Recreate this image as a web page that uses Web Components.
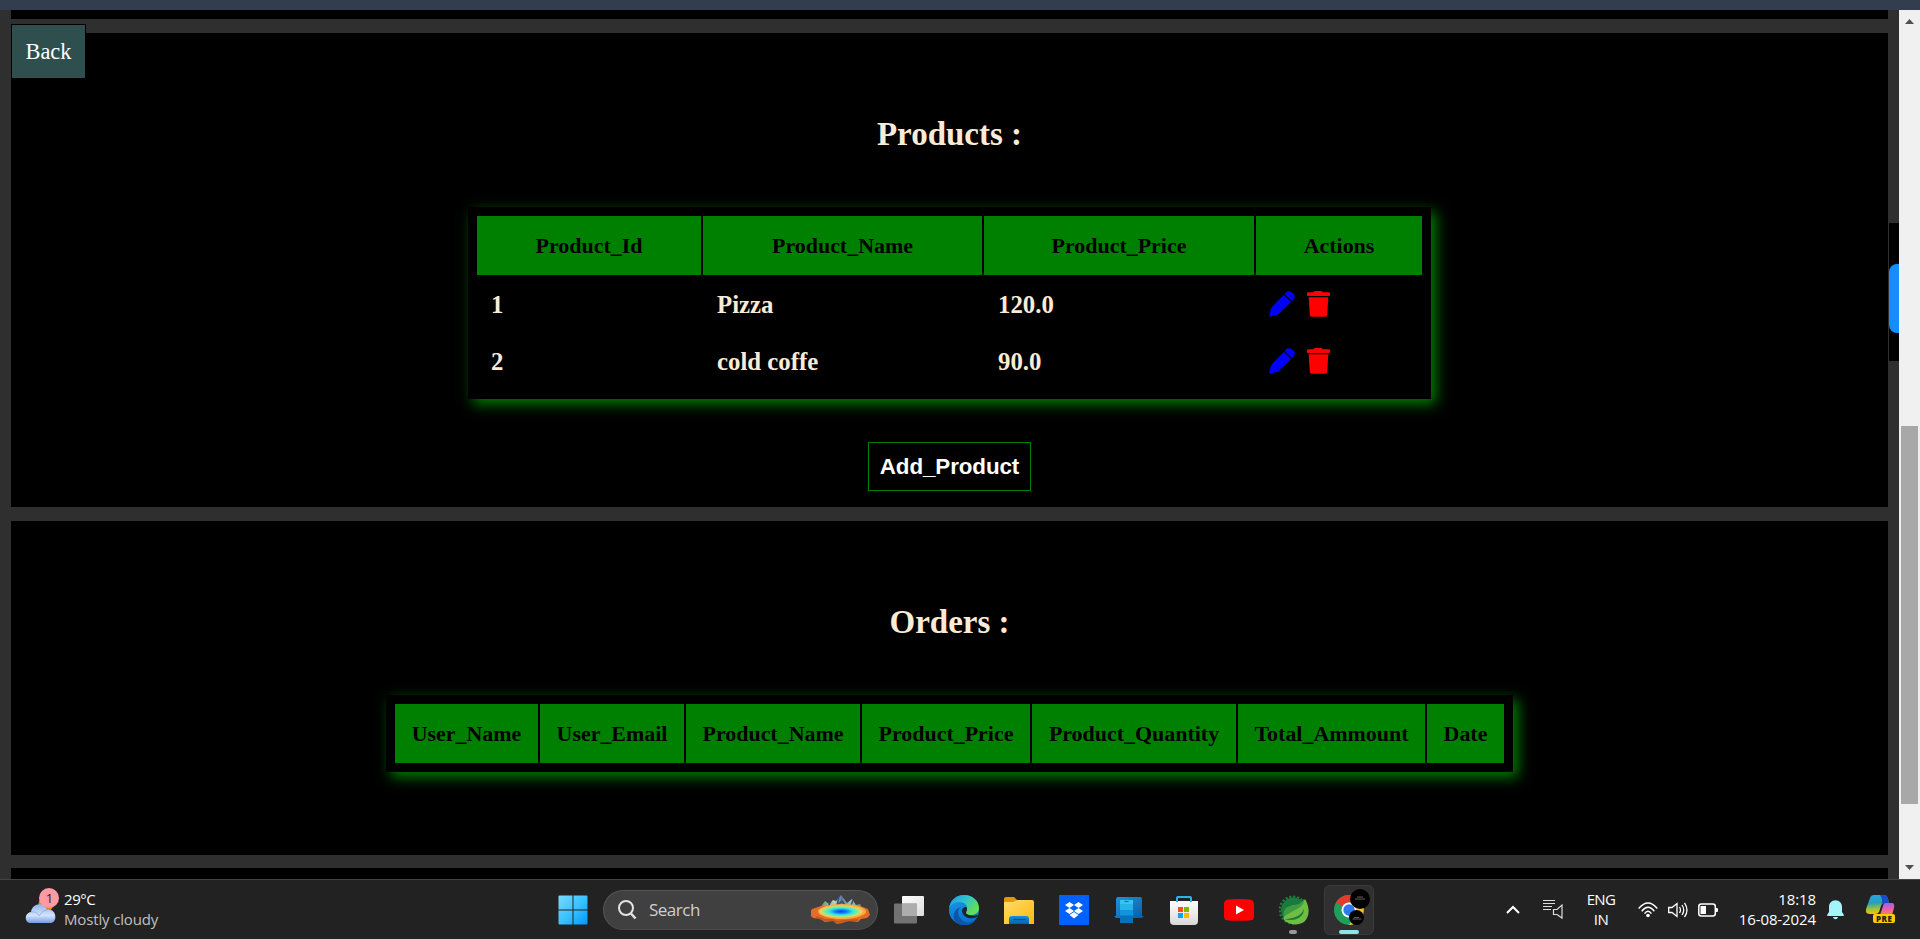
<!DOCTYPE html>
<html lang="en"><head><meta charset="utf-8"><title>Admin</title>
<style>html,body{margin:0;height:100%;overflow:hidden;background:#2f2f2f}</style></head>
<body><admin-screen></admin-screen>
<script>
const define=(name,html,setup)=>{
  const t=document.createElement('template');t.innerHTML=html;
  customElements.define(name,class extends HTMLElement{
    constructor(){super();this.attachShadow({mode:'open'}).append(t.content.cloneNode(true));}
    connectedCallback(){if(setup)setup(this,this.shadowRoot);}
  });
};

define('page-panel',`<style>
:host{display:flex;flex-direction:column;align-items:center;background:#000;box-sizing:border-box;flex:none}
h1{margin:82px 0 0;font:bold 33px/38px "Liberation Serif",serif;color:antiquewhite;height:38px}
.body{margin-top:54px;display:flex;flex-direction:column;align-items:center}
</style><h1></h1><div class="body"><slot></slot></div>`,(el,r)=>{r.querySelector('h1').textContent=el.getAttribute('heading');});

define('action-icons',`<style>:host{display:flex;gap:12px;align-items:center;margin:-2px 0 0 -1px}svg{display:block}</style>
<svg width="26" height="26" viewBox="0 0 26 26" fill="blue"><path d="M17 1.6C18.4.1 20.6-.1 22.4.9c1 .6 2 1.6 2.7 2.6 1 1.7.7 3.8-.8 5.3l-1.300 1.300L15.700 2.900z"/><path d="M14.800 3.900l7.200 7.200L10.200 22.400c-.8.8-1.700 1.300-2.700 1.600L1.500 25.400C.7 25.600.2 25.100.4 24.300L1.800 18.400c.3-1 .8-1.900 1.500-2.600z"/></svg>
<svg width="23" height="26" viewBox="0 0 23 26" fill="red"><path d="M7.500 0h7l1.200 1.300h6c.8 0 1.300.6 1.300 1.400v1c0 .8-.5 1.300-1.300 1.300H1.300C.5 5 0 4.500 0 3.700v-1c0-.8.5-1.400 1.300-1.400h5z"/><path d="M1.700 6.300h19.600L20.200 23.500c-.1 1.400-1 2.300-2.400 2.300H5.200c-1.400 0-2.300-.9-2.400-2.300z"/></svg>`);

define('data-table',`<style>
:host{display:block;background:#000;box-shadow:5px 5px 13px green;padding:9px}
.g{display:grid;gap:2px}
.h{background:green;color:#000;height:59px;display:flex;align-items:center;justify-content:center;font:bold 21.950px/25px "Liberation Serif",serif;box-sizing:border-box;white-space:nowrap}
.c{height:55px;display:flex;align-items:center;padding:1px 0 0 14px;box-sizing:border-box;font:bold 24.800px/28px "Liberation Serif",serif;color:antiquewhite;white-space:nowrap}
</style><div class="g"></div>`,(el,r)=>{
  const g=r.querySelector('.g');
  g.style.gridTemplateColumns=el.getAttribute('cols');
  el.getAttribute('head').split(',').forEach(x=>{const d=document.createElement('div');d.className='h';d.textContent=x;g.append(d);});
  (el.getAttribute('rows')||'').split(';').filter(Boolean).forEach(row=>{
    row.split(',').forEach(x=>{const d=document.createElement('div');d.className='c';d.textContent=x;g.append(d);});
    const d=document.createElement('div');d.className='c';d.append(document.createElement('action-icons'));g.append(d);
  });
});

define('add-button',`<style>:host{display:block;margin-top:43px}
button{width:163px;height:49px;padding:0;background:#000;border:1px solid green;color:#fff;font:bold 22.400px "Liberation Sans",sans-serif;letter-spacing:-.1px;display:block}</style><button><slot></slot></button>`);

define('back-button',`<style>:host{position:absolute;left:11px;top:14px;box-sizing:border-box;width:75px;height:55px;border:1px solid #000;background:darkslategray;color:#fff;font:22.400px/53px "Liberation Serif",serif;text-align:center}</style><slot></slot>`);

define('side-handle',`<style>:host{position:absolute;right:0;top:213px;width:10px;height:138px;background:#000;box-sizing:border-box;padding-top:41px;overflow:hidden}
div{height:69px;width:20px;background:#168cff;border-radius:8px}</style><div></div>`);

define('scroll-bar',`<style>:host{display:flex;flex-direction:column;width:21px;flex:none;background:#f0f0f0;align-items:center}
svg{display:block;flex:none}.t{width:17px;height:378px;background:#a8a8a8;margin-top:402px}.s{flex:1}</style>
<svg width="21" height="14" viewBox="0 0 21 14"><path d="M6 14 10.500 9 15 14z" fill="#505050"/></svg><div class="t"></div><div class="s"></div>
<svg width="21" height="20" viewBox="0 0 21 20"><path d="M6 6 10.500 11 15 6z" fill="#505050"/></svg>`);

define('search-box',`<style>:host{display:flex;align-items:center;box-sizing:border-box;width:275px;height:40px;border:1px solid #555;border-bottom-color:#4a4a4a;border-radius:20px;background:#404040;padding:0 6px 0 14px;font:17px/22px "Open Sans","Noto Sans",sans-serif;color:#cfcfcf}
span{margin-left:12px;flex:1;letter-spacing:-.5px}svg{display:block}</style>
<svg width="19" height="20" viewBox="0 0 19 20" fill="none" stroke="#e4e4e4" stroke-width="2"><circle cx="8" cy="8" r="7"/><path d="M13 13.500 17.500 18.500" stroke-width="2.500"/></svg><span><slot></slot></span>
<svg width="60" height="30" viewBox="0 0 60 30"><defs><radialGradient id="p"><stop offset="0" stop-color="#183cf0"/><stop offset=".3" stop-color="#1488f4"/><stop offset=".55" stop-color="#30e4e8"/><stop offset=".8" stop-color="#90ea90"/><stop offset="1" stop-color="#ffd050"/></radialGradient><linearGradient id="m"><stop stop-color="#5b8f58"/><stop offset=".35" stop-color="#b8d4bc"/><stop offset=".5" stop-color="#60779b"/><stop offset=".7" stop-color="#9cc8b8"/><stop offset="1" stop-color="#537b70"/></linearGradient></defs>
<path d="M8 14 14 6l4 3 4-4 3 1 5-6 6 8 5-4 4 6 4-1 4 8z" fill="url(#m)"/><path d="M28 1 26 11 31 6 35 12M42 5l-3 8M20 6l-3 6" stroke="#344b79" fill="none" stroke-width="1.500"/>
<path d="M1 14 10 11h39l8 3 2 6-3 3-6 1-3 3-9-1-7 2-5 1-4-3-8 1-5-3-7-1-4-4z" fill="#e66b25"/><path d="m5 22 9 3 8 0 4 2 7-1 14-1" stroke="#a84c22" stroke-width="2" fill="none" opacity=".6"/><ellipse cx="31" cy="16.500" rx="24" ry="7.500" fill="#ffab3d"/><ellipse cx="30" cy="16.500" rx="21.500" ry="6" fill="url(#p)"/></svg>`);

const ICONS={
start:`<svg width="30" height="30"><defs><linearGradient id="a" x1="0" y1="0" x2="30" y2="30" gradientUnits="userSpaceOnUse"><stop stop-color="#7bdcff"/><stop offset=".5" stop-color="#3cc2ff"/><stop offset="1" stop-color="#0095ff"/></linearGradient></defs><path d="M1.500 .5H14.500V14.500H.5V1.500Q.5.500 1.500.5M15.500.500H28.500Q29.500.500 29.500 1.500V14.500H15.500zM.5 15.500H14.500V29.500H1.500Q.5 29.500.5 28.500zM15.500 15.500H29.500V28.500Q29.500 29.500 28.500 29.500H15.500z" fill="url(#a)"/></svg>`,
tasks:`<svg width="30" height="30"><defs><linearGradient id="a" x2="1" y2="1"><stop stop-color="#fff"/><stop offset="1" stop-color="#dcdcdc"/></linearGradient></defs><rect x="8" y="1" width="22" height="20" rx="1" fill="url(#a)"/><rect x="0" y="8.500" width="23" height="20" rx="1" fill="#808080" opacity=".85"/><rect x="8" y="8.500" width="15" height="12.500" fill="#adadad"/></svg>`,
edge:`<svg width="30" height="30" viewBox="0 0 30 30"><defs><linearGradient id="a" x2="1" y2=".6"><stop stop-color="#2490e8"/><stop offset=".5" stop-color="#2cc5cf"/><stop offset="1" stop-color="#68e04c"/></linearGradient><linearGradient id="b" x2=".3" y2="1"><stop stop-color="#1d9be8"/><stop offset="1" stop-color="#0871d0"/></linearGradient></defs><circle cx="15" cy="15" r="15" fill="url(#b)"/><path d="M0 14C1 5 7 0 15 0c9 0 15 6 15 13 0 5-4 7-8 7-4 0-6-1-5-3 3-5 0-10-7-10C5 7 1 10 0 14z" fill="url(#a)"/><path d="M12 12c-4 3-4 9 1 13 4 4 10 3 14-1-4 8-15 8-21 3C3 21 5 14 12 12z" fill="#0c55a8"/><path d="M17 12c-4 0-5 4-3 7 3 5 9 5 14 3L29 20c-3 1-6 1-9 0-4-1-3-3-2-5 0-2 0-3-1-3z" fill="#222"/></svg>`,
folder:`<svg width="30" height="30" viewBox="0 0 30 30"><defs><linearGradient id="a" x2="1" y2="1"><stop stop-color="#ffdc6b"/><stop offset="1" stop-color="#fbb90f"/></linearGradient><linearGradient id="b" x2="0" y2="1"><stop stop-color="#1390df"/><stop offset="1" stop-color="#0862af"/></linearGradient></defs><path d="M0 4q0-2 2-2h8l3 3v5H0z" fill="#dc9a06"/><path d="M0 7h9l4-2h15q2 0 2 2v22H0z" fill="url(#a)"/><path d="M5 29v-5q0-3 3-3h14q3 0 3 3v5z" fill="url(#b)"/><path d="M9 24.500H21.500" stroke="#064c91" stroke-width="1.200"/></svg>`,
dropbox:`<svg width="30" height="30" viewBox="0 0 30 30"><path d="M0 0H30V30H0z" fill="#0061fe"/><path d="M10.500 7 15 10 10.500 13 6 10zM19.500 7 24 10 19.500 13 15 10zM10.500 13 15 16 10.500 19 6 16zM19.500 13 24 16 19.500 19 15 16zM15 17 19.500 20 15 23.500 10.500 20z" fill="#fff"/></svg>`,
phone:`<svg width="30" height="30" viewBox="0 0 30 30"><defs><linearGradient id="a" x2="1" y2="1"><stop stop-color="#2094dc"/><stop offset="1" stop-color="#0a5ba6"/></linearGradient></defs><path d="M3 2H26Q28 2 28 4V22H2V4zM0 21H30L28 23H2z" fill="url(#a)"/><path d="M6 5H19V16H6z" fill="#34c5f2"/><path d="M6 9H19V16H6z" fill="#27b3ea"/><path d="M6 15H19V21H6z" fill="#1393dc"/><path d="M6 20.500H19V28H6z" fill="#0970ba"/><path d="M10.500 6.500h4" stroke="#1369a0"/></svg>`,
store:`<svg width="30" height="30" viewBox="0 0 30 30"><defs><linearGradient id="a" x2="0" y2="1"><stop stop-color="#fff"/><stop offset="1" stop-color="#d8d8d8"/></linearGradient></defs><path d="M1 6H29V26Q29 30 25 30H5Q1 30 1 26z" fill="url(#a)"/><path d="M8 7V3Q8 2 9 2H21Q22 2 22 3V7" fill="none" stroke="#28b5f0" stroke-width="2"/><path d="M9 12h5v5H9z" fill="#f25022"/><path d="M15 12h5v5h-5z" fill="#7fba00"/><path d="M9 18h5v5H9z" fill="#00a4ef"/><path d="M15 18h5v5h-5z" fill="#ffb900"/></svg>`,
youtube:`<svg width="30" height="30" viewBox="0 0 30 30"><path d="M4 4.500Q15 3.500 26 4.500Q30 5 30 9V21Q30 25 26 25.500Q15 26 4 25.500Q0 25 0 21V9Q0 5 4 4.500z" fill="#f00"/><path d="M12 10.500 20 15 12 19.500z" fill="#fff"/></svg>`,
spring:`<svg width="30" height="30" viewBox="0 0 30 30"><circle cx="14" cy="15" r="13.300" fill="none" stroke="#1f7a3c" stroke-width="2.400" stroke-dasharray="2.200 1.700"/><circle cx="14.500" cy="15" r="12.500" fill="#197a3e"/><path d="M5 25C3 13 12 10 18 10Q23 9 26 4C31 12 31 22 25 27 19 31 10 30 5 25z" fill="#6fbe44"/><path d="M5 24C12 24 22 22 25 14 25 23 15 27 5 24z" fill="#1d773b"/><path d="M5 22C3 13 9 11 16 10 22 9 23 6 25 4 26 13 15 14 5 22z" fill="#3f9a42"/></svg>`,
chrome:`<svg width="50" height="50" viewBox="0 0 50 50"><rect x=".5" y=".5" width="49" height="49" rx="5" fill="#303030" stroke="#3b3b3b"/><g transform="translate(10 10)"><circle cx="15" cy="15" r="15" fill="#1fa05a"/><path d="M15 15 2 7.500C8-2.500 22-2.500 28 7.500z" fill="#e33b2e"/><path d="M15 15V7.500H28C33 18 26 30 15 30L21.500 18.500z" fill="#fcc31e"/><circle cx="15" cy="15" r="7.500" fill="#fff"/><circle cx="15" cy="15" r="5.700" fill="#2f78ed"/></g><circle cx="36" cy="14" r="10" fill="#000"/><circle cx="32.500" cy="32.500" r="7.500" fill="#000"/><path d="M33 12h6M31 14h10M30 32.500h5M28.500 34h9" stroke="#777" stroke-width=".8"/><rect x="15" y="45" width="20" height="4" rx="2" fill="#8fe3ea"/></svg>`,
weather:`<svg width="36" height="36" viewBox="0 0 36 36"><defs><linearGradient id="a" x2="0" y2="1"><stop stop-color="#8fb5f0"/><stop offset=".6" stop-color="#d3e2fb"/><stop offset="1" stop-color="#759be2"/></linearGradient></defs><circle cx="21" cy="16" r="7.500" fill="#f08018"/><path d="M6 35C-1 35-1 25 6 24 7 15 19 13 22 22 32 20 33 35 25 35z" fill="url(#a)"/><path d="M6 24q6-1 8 4M14 28q3-6 8-6" fill="none" stroke="#7ba2e5" opacity=".6"/><circle cx="24" cy="10" r="10" fill="#fe9aa4"/><text x="24.500" y="15" font-family="Open Sans" font-size="13" fill="#222" text-anchor="middle">1</text></svg>`,
chevron:`<svg width="14" height="9" viewBox="0 0 14 9"><path d="M1 8 7 2l6 6" fill="none" stroke="#fff" stroke-width="2"/></svg>`,
cast:`<svg width="20" height="21" viewBox="0 0 20 21"><path d="M0 1.500H12M0 4.500H12M0 7.500H9M0 10.500H8" stroke="#ddd" stroke-width="1.200"/><path d="M10.500 10.500H14L19 6V19L14 15.500H10.500z" fill="none" stroke="#ddd" stroke-width="1.200"/></svg>`,
wifi:`<svg width="20" height="16" viewBox="0 0 20 16" fill="none" stroke="#fff" stroke-width="1.400"><path d="M.7 6.500Q10-4.500 19.300 6.500M3.700 9.200Q10 1.300 16.300 9.200M6.500 11.600Q10 7 13.500 11.600"/><circle cx="10" cy="13.500" r="1.800" fill="#fff" stroke="none"/></svg>`,
volume:`<svg width="20" height="18" viewBox="0 0 20 18" fill="none" stroke="#fff" stroke-width="1.300"><path d="M.7 6.500H4L9 2.500V15.500L4 11.500H.7zM11.500 6Q13.500 9 11.500 12M14 4Q17.500 9 14 14M16.500 1.800Q21.500 9 16.500 16.200"/></svg>`,
battery:`<svg width="20" height="14" viewBox="0 0 20 14"><rect x=".8" y="1" width="16.500" height="12" rx="2.500" fill="none" stroke="#fff" stroke-width="1.500"/><path d="M2.500 3H8V11H2.500zM18 5h1q1 0 1 1v2q0 1-1 1h-1z" fill="#fff"/></svg>`,
bell:`<svg width="17" height="20" viewBox="0 0 17 20"><path d="M8.500.300C4.500.300 2 3.300 2 7v5L.3 14.500V16H16.700V14.500L15 12V7C15 3.300 12.500.300 8.500.300zM6 17H11Q10.500 19.300 8.500 19.300T6 17z" fill="#a2f5fb"/></svg>`,
copilot:`<svg width="30" height="29" viewBox="0 0 30 29"><defs><linearGradient id="a" x2=".1" y2="1"><stop stop-color="#20a5f2"/><stop offset=".45" stop-color="#2a9fb5"/><stop offset=".75" stop-color="#9bc33a"/><stop offset="1" stop-color="#f2c400"/></linearGradient><linearGradient id="b" x2="0" y2="1"><stop stop-color="#9c5ff0"/><stop offset=".5" stop-color="#ed5fa8"/><stop offset="1" stop-color="#ff8558"/></linearGradient></defs><path d="M8 0H18Q21 0 22 4L23 8H18Q16 8 15 11L13 17Q12 19 9 19H4Q-1 19 0 14L4 3Q5 0 8 0z" fill="url(#a)"/><path d="M14 0h4Q21 0 22 4L23 8H18Q16 8 15.500 9 17 5 15 2z" fill="#174ed0"/><path d="M19 8h7Q29 8 28 13L26 20H14L17 11Q17.500 8 19 8z" fill="url(#b)"/><rect x="7" y="19" width="22" height="9" rx="2" fill="#fc0"/><text x="18.200" y="26.500" font-family="Open Sans" font-weight="800" font-size="8" fill="#222" text-anchor="middle" letter-spacing=".5">PRE</text></svg>`
};
define('bar-icon',`<style>:host{display:flex;align-items:center;justify-content:center;flex:none}svg{display:block}</style><div></div>`,(el,r)=>{r.querySelector('div').innerHTML=ICONS[el.getAttribute('name')];});

define('task-bar',`<style>
:host{display:flex;box-sizing:border-box;height:60px;flex:none;background:#222;border-top:1px solid #444;color:#fff;font:15px/20px "Open Sans","Noto Sans",sans-serif;align-items:center}
.w{display:flex;width:545px;padding-left:25px;box-sizing:border-box;gap:3px;align-items:center}
.w bar-icon{margin-top:-7px}.w p{margin:-2px 0 0;letter-spacing:-.45px}.w small{display:block;font-size:15px;color:#c0c0c0;letter-spacing:-.15px}
.apps{display:flex;align-items:center}.apps bar-icon{width:55px;height:59px}.apps search-box{margin-left:3px;margin-right:3px}
.run{position:relative}.run i{position:absolute;left:23px;bottom:5px;width:8px;height:4px;border-radius:2px;background:#999}
.tray{display:flex;align-items:center;margin-left:130px}
.lang{text-align:center;width:38px;margin:-2px 18px 0 19px;letter-spacing:-.6px}.time{text-align:right;width:90px;margin:-2px 0 0 8px;letter-spacing:-.1px;white-space:nowrap}
</style>
<div class="w"><bar-icon name="weather"></bar-icon><p>29°C<small>Mostly cloudy</small></p></div>
<div class="apps"><bar-icon name="start"></bar-icon><search-box>Search</search-box><bar-icon name="tasks"></bar-icon><bar-icon name="edge"></bar-icon><bar-icon name="folder"></bar-icon><bar-icon name="dropbox"></bar-icon><bar-icon name="phone"></bar-icon><bar-icon name="store"></bar-icon><bar-icon name="youtube"></bar-icon><div class="run"><bar-icon name="spring"></bar-icon><i></i></div><bar-icon name="chrome"></bar-icon></div>
<div class="tray"><bar-icon name="chevron"></bar-icon><bar-icon name="cast" style="margin-left:23px"></bar-icon><div class="lang">ENG<br>IN</div><bar-icon name="wifi"></bar-icon><bar-icon name="volume" style="margin-left:10px"></bar-icon><bar-icon name="battery" style="margin-left:10px"></bar-icon><div class="time">18:18<br>16-08-2024</div><bar-icon name="bell" style="margin-left:11px"></bar-icon><bar-icon name="copilot" style="margin-left:22px"></bar-icon></div>`);

define('admin-screen',`<style>
:host{display:flex;flex-direction:column;height:939px;width:1920px;background:#2f2f2f;overflow:hidden}
.top{height:10px;background:#333d50;flex:none}.mid{display:flex;height:869px;flex:none}
.page{position:relative;flex:1;padding:0 11px;overflow:hidden;display:flex;flex-direction:column}
.strip{background:#000;flex:none}
</style>
<div class="top"></div><div class="mid"><div class="page">
<div class="strip" style="height:9px;margin-bottom:14px"></div>
<page-panel heading="Products :" style="height:474px;margin-bottom:14px"><data-table cols="224px 279px 270px 166px" head="Product_Id,Product_Name,Product_Price,Actions" rows="1,Pizza,120.0;2,cold coffe,90.0" style="padding-bottom:10px"></data-table><add-button>Add_Product</add-button></page-panel>
<page-panel heading="Orders :" style="height:334px;margin-bottom:13px"><data-table cols="143px 144px 174px 168px 204px 187px 77px" head="User_Name,User_Email,Product_Name,Product_Price,Product_Quantity,Total_Ammount,Date"></data-table></page-panel>
<div class="strip" style="height:11px"></div>
<back-button>Back</back-button><side-handle></side-handle></div><scroll-bar></scroll-bar></div><task-bar></task-bar>`);
</script></body></html>
